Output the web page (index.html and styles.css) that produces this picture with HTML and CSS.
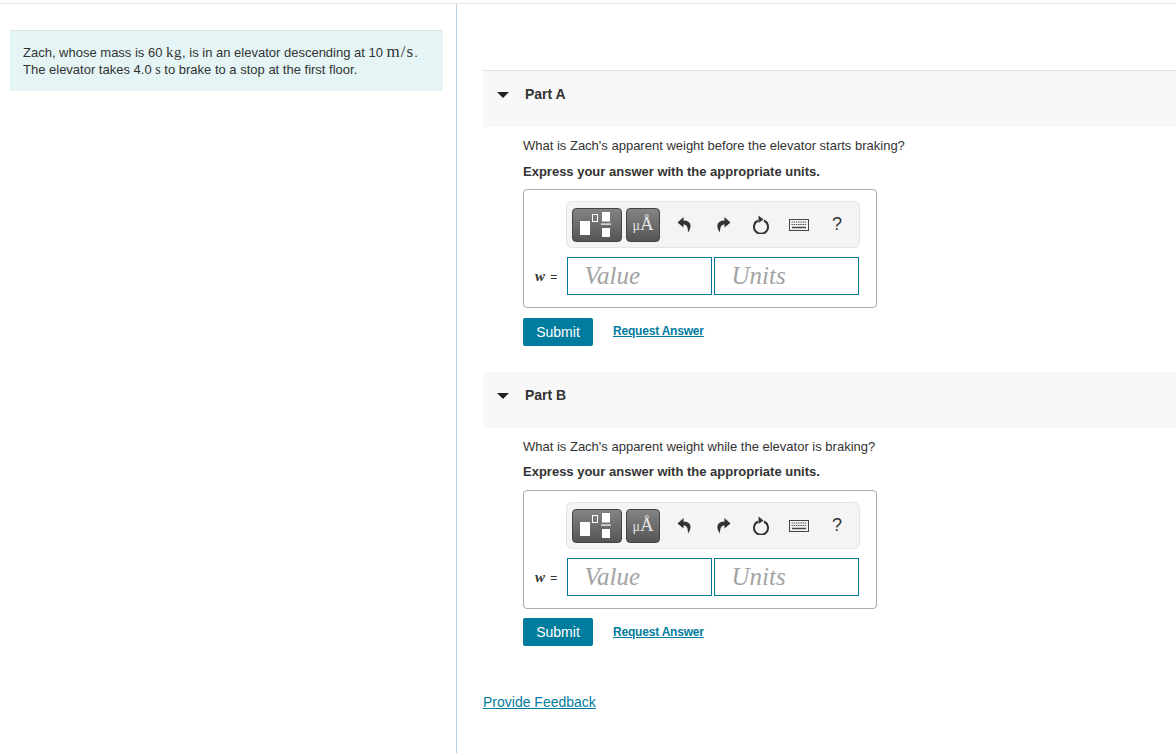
FILE: index.html
```html
<!DOCTYPE html>
<html lang="en">
<head>
    <meta charset="UTF-8">
    <title>Part A and Part B</title>
    <link rel="stylesheet" href="styles.css">
</head>
<body>
    <div class="page">
        <div class="left-col">
            <div class="intro">
                Zach, whose mass is 60 <span class="math">kg</span>, is in an elevator descending at 10 <span class="math math-speed">m/s</span>.<br>
                The elevator takes 4.0 <span class="math-s">s</span> to brake to a stop at the first floor.
            </div>
        </div>

        <div class="right-col">
            <div class="part part-a">
                <div class="part-head">
                    <span class="arrow"></span>
                    <span class="part-title">Part A</span>
                </div>
                <div class="part-body">
                    <p class="question">What is Zach's apparent weight before the elevator starts braking?</p>
                    <p class="express">Express your answer with the appropriate units.</p>
                    <div class="answer-box">
                        <div class="toolbar">
                            <button class="tool-btn tool-wide">
                                <svg width="48" height="32" viewBox="1 1 48 32"><rect x="8" y="13" width="10" height="14" fill="#fff"/><rect x="20.500" y="6.500" width="5" height="7" fill="none" stroke="#fff"/><rect x="30" y="4" width="8" height="9.500" fill="#fff"/><rect x="29" y="15.500" width="10" height="1.200" fill="#fff"/><rect x="30" y="20" width="8" height="9" fill="#fff"/></svg>
                            </button>
                            <button class="tool-btn tool-unit"><span class="mu">μ</span>Å</button>
                            <span class="tool-icon">
                                <svg width="16" height="16" viewBox="0 0 16 16"><path d="M6.500 0 L0.500 5.500 L6.500 10.500 V7.500 C9.500 7.500 11 9.500 11 15.500 C15 10.500 15 3.500 6.500 3.500 Z" fill="#333"/></svg>
                            </span>
                            <span class="tool-icon">
                                <svg width="16" height="16" viewBox="0 0 16 16"><path d="M9.500 0 L15.500 5.500 L9.500 10.500 V7.500 C6.500 7.500 5 9.500 5 15.500 C1 10.500 1 3.500 9.500 3.500 Z" fill="#333"/></svg>
                            </span>
                            <span class="tool-icon">
                                <svg width="18" height="19" viewBox="0 0 18 19"><path d="M6 5.500 A7 7 0 1 0 12 5.500" fill="none" stroke="#333" stroke-width="2"/><path d="M6.500 0.500 L11.500 4.500 L6.500 8 Z" fill="#333"/></svg>
                            </span>
                            <span class="tool-icon">
                                <svg width="20" height="12" viewBox="0 0 20 12"><rect x="0.500" y="0.500" width="19" height="11" fill="#f4f4f4" stroke="#444"/><path d="M2.500 3 H17.500 M2.500 5.500 H17.500" stroke="#555" stroke-width="1.200" stroke-dasharray="1.500 .7"/><path d="M3 8.500 H17" stroke="#444" stroke-width="1.500"/></svg>
                            </span>
                            <span class="tool-icon tool-help">?</span>
                        </div>
                        <div class="input-row">
                            <span class="var-label"><i>w</i> =</span>
                            <div class="fake-input">Value</div>
                            <div class="fake-input">Units</div>
                        </div>
                    </div>
                    <div class="actions">
                        <button class="submit">Submit</button>
                        <a class="request" href="#">Request Answer</a>
                    </div>
                </div>
            </div>

            <div class="part part-b">
                <div class="part-head">
                    <span class="arrow"></span>
                    <span class="part-title">Part B</span>
                </div>
                <div class="part-body">
                    <p class="question">What is Zach's apparent weight while the elevator is braking?</p>
                    <p class="express">Express your answer with the appropriate units.</p>
                    <div class="answer-box">
                        <div class="toolbar">
                            <button class="tool-btn tool-wide">
                                <svg width="48" height="32" viewBox="1 1 48 32"><rect x="8" y="13" width="10" height="14" fill="#fff"/><rect x="20.500" y="6.500" width="5" height="7" fill="none" stroke="#fff"/><rect x="30" y="4" width="8" height="9.500" fill="#fff"/><rect x="29" y="15.500" width="10" height="1.200" fill="#fff"/><rect x="30" y="20" width="8" height="9" fill="#fff"/></svg>
                            </button>
                            <button class="tool-btn tool-unit"><span class="mu">μ</span>Å</button>
                            <span class="tool-icon">
                                <svg width="16" height="16" viewBox="0 0 16 16"><path d="M6.500 0 L0.500 5.500 L6.500 10.500 V7.500 C9.500 7.500 11 9.500 11 15.500 C15 10.500 15 3.500 6.500 3.500 Z" fill="#333"/></svg>
                            </span>
                            <span class="tool-icon">
                                <svg width="16" height="16" viewBox="0 0 16 16"><path d="M9.500 0 L15.500 5.500 L9.500 10.500 V7.500 C6.500 7.500 5 9.500 5 15.500 C1 10.500 1 3.500 9.500 3.500 Z" fill="#333"/></svg>
                            </span>
                            <span class="tool-icon">
                                <svg width="18" height="19" viewBox="0 0 18 19"><path d="M6 5.500 A7 7 0 1 0 12 5.500" fill="none" stroke="#333" stroke-width="2"/><path d="M6.500 0.500 L11.500 4.500 L6.500 8 Z" fill="#333"/></svg>
                            </span>
                            <span class="tool-icon">
                                <svg width="20" height="12" viewBox="0 0 20 12"><rect x="0.500" y="0.500" width="19" height="11" fill="#f4f4f4" stroke="#444"/><path d="M2.500 3 H17.500 M2.500 5.500 H17.500" stroke="#555" stroke-width="1.200" stroke-dasharray="1.500 .7"/><path d="M3 8.500 H17" stroke="#444" stroke-width="1.500"/></svg>
                            </span>
                            <span class="tool-icon tool-help">?</span>
                        </div>
                        <div class="input-row">
                            <span class="var-label"><i>w</i> =</span>
                            <div class="fake-input">Value</div>
                            <div class="fake-input">Units</div>
                        </div>
                    </div>
                    <div class="actions">
                        <button class="submit">Submit</button>
                        <a class="request" href="#">Request Answer</a>
                    </div>
                </div>
            </div>

            <a class="feedback" href="#">Provide Feedback</a>
        </div>
    </div>
</body>
</html>
```

FILE: styles.css
```css
* {
    box-sizing: border-box;
}

body {
    margin: 0;
    background-color: #fff;
    font-family: "Liberation Sans", Arial, sans-serif;
    font-size: 13px;
    color: #333;
}

.page {
    display: flex;
    height: 753px;
    margin-top: 3px;
    border-top: 1px solid #e3e6e8;
    overflow: hidden;
}

.left-col {
    width: 457px;
    flex-shrink: 0;
    padding: 26px 13px 0 10px;
    border-right: 1px solid #b9cfdf;
}

.intro {
    height: 61px;
    padding: 12px 13px 0;
    background-color: #e5f5f6;
    border-top: 1px solid #dfe5e7;
    font-size: 13px;
    line-height: 17px;
}

.math {
    font-family: "Liberation Serif", serif;
    font-size: 15px;
    letter-spacing: 0.5px;
}

.math-speed {
    font-size: 17px;
    letter-spacing: 1px;
}

.math-s {
    font-family: "Liberation Serif", serif;
    font-size: 14px;
}

.right-col {
    flex: 1;
    padding: 66px 0 0 26px;
}

.part-b {
    margin-top: 26px;
}

.part-a .part-head {
    height: 57px;
    border-top: 1px solid #e0e0e0;
}

.part-head {
    display: flex;
    height: 56px;
    padding: 15px 0 0 14px;
    background-color: #f8f8f8;
}

.arrow {
    width: 0;
    height: 0;
    margin-top: 6px;
    border-left: 6px solid transparent;
    border-right: 6px solid transparent;
    border-top: 6px solid #222;
}

.part-title {
    margin-left: 16px;
    font-size: 14px;
    font-weight: bold;
    line-height: 16px;
}

.part-body {
    padding: 11px 0 0 40px;
}

.question,
.express {
    margin: 0;
    font-size: 13px;
    line-height: 16px;
}

.express {
    margin-top: 10px;
    font-weight: bold;
}

.part-b .express {
    margin-top: 9px;
}

.answer-box {
    width: 354px;
    height: 119px;
    margin-top: 10px;
    padding: 11px 16px 0 42px;
    border: 1px solid #aaa;
    border-radius: 4px;
}

.part-a .answer-box {
    margin-top: 9px;
}

.toolbar {
    display: flex;
    align-items: center;
    height: 47px;
    padding-left: 5px;
    background-color: #f4f4f4;
    border: 1px solid #e4e4e4;
    border-radius: 6px;
}

.tool-btn {
    height: 34px;
    padding: 0;
    color: #e4e4e4;
    background: linear-gradient(#848484, #555);
    border: 1px solid #444;
    border-radius: 4px;
}

.tool-wide {
    display: flex;
    align-items: center;
    justify-content: center;
    width: 50px;
}

.tool-unit {
    width: 34px;
    margin: 0 6px 0 4px;
    font-family: "Liberation Serif", serif;
    font-size: 19px;
    line-height: 30px;
}

.mu {
    font-size: 14px;
}

.tool-icon {
    display: flex;
    align-items: center;
    justify-content: center;
    width: 38px;
    height: 24px;
}

.tool-help {
    font-size: 18px;
}

.input-row {
    display: flex;
    align-items: center;
    gap: 2px;
    margin: 9px 0 0 1px;
}

.var-label {
    position: absolute;
    margin: 1px 0 0 -32px;
    font-size: 12px;
}

.var-label i {
    margin-right: 2px;
    font-family: "Liberation Serif", serif;
    font-size: 15px;
    font-weight: bold;
}

.fake-input {
    width: 145px;
    height: 38px;
    padding: 4px 16px 0 16.500px;
    font-family: "Liberation Serif", serif;
    font-size: 25px;
    font-style: italic;
    color: #a3a3a3;
    border: 1px solid #007b9e;
}

.actions {
    display: flex;
    align-items: center;
    margin-top: 10px;
}

.part-b .actions {
    margin-top: 9px;
}

.submit {
    width: 70px;
    height: 28px;
    padding: 0;
    font-family: inherit;
    font-size: 14px;
    color: #fff;
    background-color: #007c9e;
    border: none;
    border-radius: 2px;
}

.request {
    margin: -3px 0 0 20px;
    font-size: 12px;
    font-weight: bold;
    letter-spacing: -0.2px;
    color: #007c9e;
}

.part-b .request {
    margin-top: -1px;
}

.feedback {
    display: block;
    margin-top: 48px;
    font-size: 14px;
    color: #007c9e;
}
```
